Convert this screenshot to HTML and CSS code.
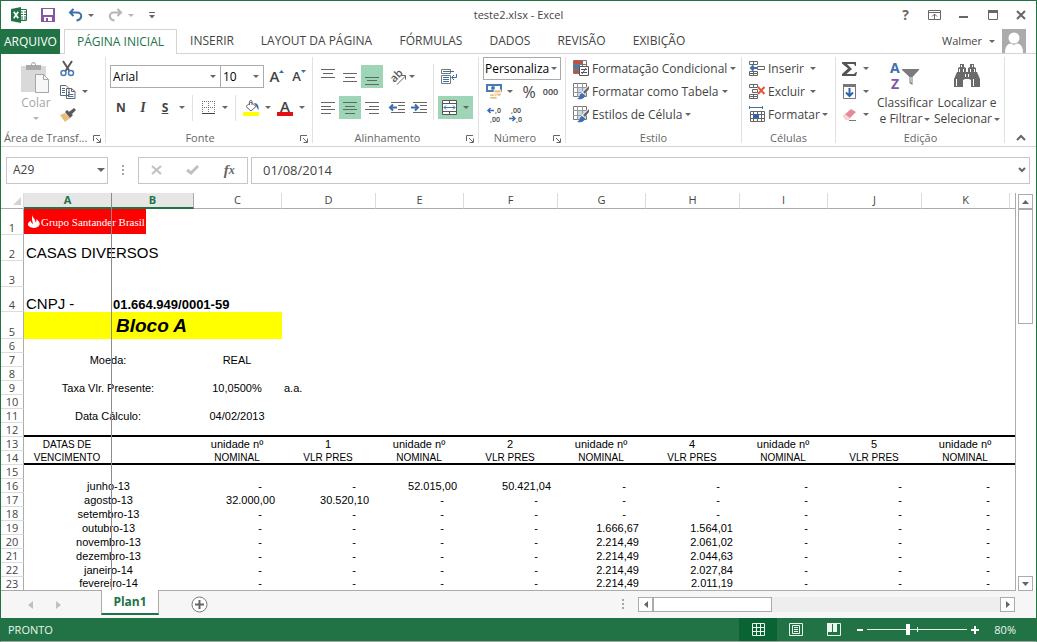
FILE: index.html
```html
<!DOCTYPE html>
<html lang="pt-BR">
<head>
<meta charset="utf-8">
<title>teste2.xlsx - Excel</title>
<link rel="stylesheet" href="styles.css">
</head>
<body>
<div class="window">
  <header class="titlebar">
    <div class="quick">
      <svg class="app-icon" width="17" height="16" viewBox="0 0 17 16"><path fill="#fff" stroke="#217346" d="M9 2.500h6.500v11H9"/><path stroke="#217346" stroke-width="1" d="M10 5h2M13 5h2M10 7.500h2M13 7.500h2M10 10h2M13 10h2M10 12h2M13 12h2"/><path fill="#217346" d="M0 2l10-2v16L0 14z"/><path stroke="#fff" stroke-width="1.700" d="M2.800 4.800l4.400 6.400M7.200 4.800l-4.400 6.400"/></svg>
      <button class="qbtn" aria-label="Salvar"><svg width="14" height="14" viewBox="0 0 14 14"><path fill="#8456a5" fill-rule="evenodd" d="M0 0h14v14H0zM2 1v6h10V1zM3 9v4h2v-3h2v3h4V9z"/></svg></button>
      <button class="qbtn" aria-label="Desfazer"><svg width="15" height="14" viewBox="0 0 15 14"><path fill="none" stroke="#3d6fae" stroke-width="2" d="M2 4.500h7c6 0 5.500 7-.5 8M5.500 1L2 4.500 5.500 8"/></svg></button>
      <i class="caret"></i>
      <button class="qbtn redo" aria-label="Refazer"><svg width="15" height="14" viewBox="0 0 15 14"><path fill="none" stroke="#b9b3b6" stroke-width="2" d="M13 4.500H6c-6 0-5.500 7 .5 8M9.500 1L13 4.500 9.500 8"/></svg></button>
      <i class="caret pale"></i>
      <button class="qbtn" aria-label="Personalizar barra"><svg width="6" height="7" viewBox="0 0 6 7"><path fill="#666" d="M0 0h6v1H0zM0 3h6L3 6.500z"/></svg></button>
    </div>
    <h1 class="doc-title">teste2.xlsx - Excel</h1>
    <div class="wincontrols">
      <button aria-label="Ajuda" class="help">?</button>
      <button aria-label="Opções da faixa"><svg width="13" height="10" viewBox="0 0 13 10"><path fill="none" stroke="#666" d="M.5.5h12v9H.5zM1 2.500h11M6.500 9V4M4 6.500L6.500 4 9 6.500"/></svg></button>
      <button aria-label="Minimizar"><svg width="10" height="10" viewBox="0 0 10 10"><path fill="#666" d="M0 6h9v2H0z"/></svg></button>
      <button aria-label="Maximizar"><svg width="10" height="10" viewBox="0 0 10 10"><path fill="none" stroke="#666" d="M.5.5h9v9H.5z"/><path fill="#666" d="M0 0h10v3H0z"/></svg></button>
      <button aria-label="Fechar"><svg width="10" height="10" viewBox="0 0 10 10"><path stroke="#666" stroke-width="2" d="M1 1l8 8M9 1L1 9"/></svg></button>
    </div>
  </header>

  <nav class="tabs">
    <button class="file">ARQUIVO</button>
    <button class="tab active">PÁGINA INICIAL</button>
    <button class="tab t-ins">INSERIR</button>
    <button class="tab t-lay">LAYOUT DA PÁGINA</button>
    <button class="tab t-for">FÓRMULAS</button>
    <button class="tab t-dad">DADOS</button>
    <button class="tab t-rev">REVISÃO</button>
    <button class="tab t-exi">EXIBIÇÃO</button>
    <button class="user">Walmer <i class="caret"></i></button>
    <svg class="avatar" width="24" height="24" viewBox="0 0 24 24"><path fill="#ababab" d="M0 0h24v24H0z"/><circle cx="12" cy="9" r="5.500" fill="#fff"/><path fill="#fff" d="M3 24c0-6 2-9 6-9.500l3 1.500 3-1.500c4 .5 6 3.500 6 9.500z"/></svg>
  </nav>

  <section class="ribbon">
    <div class="group g-clip">
      <div class="body">
        <button class="paste" disabled><svg width="30" height="32" viewBox="0 0 30 32"><path fill="#d9d9d9" d="M0 4h25v26H0z"/><path fill="#a9a9a9" d="M5 8V3h5c0-4 5-4 5 0h5v5zM11 3h3V1.500h-3z"/><path fill="#f7f7f7" stroke="#a6a6a6" d="M14.500 12.500h8l5 5v13h-13z"/><path fill="none" stroke="#a6a6a6" d="M22.500 12.500v5h5"/></svg><span>Colar</span><i class="caret pale"></i></button>
        <div class="stack">
          <button aria-label="Recortar"><svg width="15" height="16" viewBox="0 0 15 16"><path stroke="#595959" stroke-width="2" d="M3 0l6.500 10M12 0L5.500 10"/><circle cx="3.500" cy="12" r="2.500" fill="#fff" stroke="#4a79b5" stroke-width="1.500"/><circle cx="11" cy="12" r="2.500" fill="#fff" stroke="#4a79b5" stroke-width="1.500"/></svg></button>
          <button aria-label="Copiar"><svg width="16" height="14" viewBox="0 0 16 14"><path fill="#fff" stroke="#666" d="M.5.5H6l3 3v7H.5zM6.500 3.500h5l3.500 3v7H6.500zM11.500 3.500v3H15"/><path stroke="#3d6fae" d="M2 3.500h3M2 5.500h3M2 7.500h3M8 7.500h2M8 9.500h5.500M8 11.500h5.500"/></svg><i class="caret"></i></button>
          <button aria-label="Pincel"><svg width="16" height="14" viewBox="0 0 16 14"><path fill="#e8bd79" d="M0 7l5-2 5 5-5 4z"/><path fill="#595959" d="M5 4l2-2 6 5-3 3zM9 4l5-4 2 2-4 4z"/></svg></button>
        </div>
      </div>
      <div class="label">Área de Transf... <svg class="launch" width="8" height="8"><use href="#launch"/></svg></div>
    </div>

    <div class="group g-font">
      <div class="body two">
        <div class="line">
          <label class="combo c-font"><select aria-label="Fonte"><option>Arial</option></select></label>
          <label class="combo c-size"><select aria-label="Tamanho"><option>10</option></select></label>
          <button class="grow" aria-label="Aumentar fonte">A<svg width="5" height="3" viewBox="0 0 5 3"><path fill="#3d6fae" d="M0 3l2.500-3L5 3z"/></svg></button>
          <button class="grow shrink" aria-label="Diminuir fonte">A<svg width="5" height="3" viewBox="0 0 5 3"><path fill="#3d6fae" d="M0 0l2.500 3L5 0z"/></svg></button>
        </div>
        <div class="line">
          <button class="ib"><b>N</b></button>
          <button class="ib it"><b>I</b></button>
          <button class="ib"><b><u>S</u></b></button>
          <i class="caret"></i><i class="sep"></i>
          <button class="ib" aria-label="Bordas"><svg width="13" height="13" viewBox="0 0 13 13"><path fill="none" stroke="#777" stroke-dasharray="1 1" d="M0 .5h13M0 6.500h13M.5 0v12M6.500 0v12M12.500 0v12"/><path stroke="#444" d="M0 12.500h13"/></svg></button>
          <i class="caret"></i><i class="sep"></i>
          <button class="ib" aria-label="Preenchimento"><svg width="17" height="16" viewBox="0 0 17 16"><path fill="#fff" stroke="#666" d="M3 6.500L8 2l5 4.500-5 4.500zM6.500 5V1.500C7 0 9 0 9 1.500V5"/><path fill="#3d6fae" d="M11 3c4 0 5 3 4.500 7-1.500-1-1.500-3-2.500-4z"/><path fill="#ff0" d="M0 12h16v4H0z"/></svg></button>
          <i class="caret"></i>
          <button class="ib color" aria-label="Cor da fonte"><span>A</span></button>
          <i class="caret"></i>
        </div>
      </div>
      <div class="label">Fonte <svg class="launch" width="8" height="8"><use href="#launch"/></svg></div>
    </div>

    <div class="group g-align">
      <div class="body">
        <div class="two">
          <div class="line">
            <button class="ib" aria-label="Superior"><svg width="14" height="16"><path stroke="#666" d="M0 .5h14M2 4.500h10M0 8.500h14"/></svg></button>
            <button class="ib" aria-label="Meio"><svg width="14" height="16"><path stroke="#666" d="M0 4.500h14M2 8.500h10M0 12.500h14"/></svg></button>
            <button class="ib on" aria-label="Inferior"><svg width="14" height="16"><path stroke="#5a6b61" d="M0 8.500h14M2 11.500h10M0 15.500h14"/></svg></button>
            <button class="ib orient" aria-label="Orientação"><svg width="17" height="16" viewBox="0 0 17 16"><text x="1" y="12" transform="rotate(-45 5 9)" class="ab">ab</text><path fill="none" stroke="#666" d="M7 15.500L15.500 7M11.500 6.500h4v4"/></svg></button><i class="caret"></i>
          </div>
          <div class="line">
            <button class="ib" aria-label="Esquerda"><svg width="14" height="12"><path stroke="#666" d="M0 .5h14M0 4.500h10M0 7.500h14M0 11.500h10"/></svg></button>
            <button class="ib on" aria-label="Centro"><svg width="14" height="12"><path stroke="#5a6b61" d="M0 .5h14M2 4.500h10M0 7.500h14M2 11.500h10"/></svg></button>
            <button class="ib" aria-label="Direita"><svg width="14" height="12"><path stroke="#666" d="M0 .5h14M4 4.500h10M0 7.500h14M4 11.500h10"/></svg></button>
            <button class="ib indent" aria-label="Diminuir recuo"><svg width="16" height="12"><path stroke="#666" d="M2 .5h14M9 3.500h7M9 7.500h7M2 10.500h14"/><path fill="none" stroke="#3d6fae" stroke-width="2" d="M8 5.500H1M4 2.500l-3 3 3 3"/></svg></button>
            <button class="ib" aria-label="Aumentar recuo"><svg width="16" height="12"><path stroke="#666" d="M2 .5h14M9 3.500h7M9 7.500h7M2 10.500h14"/><path fill="none" stroke="#3d6fae" stroke-width="2" d="M0 5.500h7M4 2.500l3 3-3 3"/></svg></button>
          </div>
        </div>
        <i class="sep tall"></i>
        <div class="two merge">
          <button class="ib" aria-label="Quebrar texto"><svg width="17" height="15" viewBox="0 0 17 15"><path fill="#fff" stroke="#777" d="M.5.5h9v4h-9zM.5 6.500h9v8h-9z"/><path fill="none" stroke="#3d6fae" d="M2 2.500h11M2 8.500h6M2 10.500h6M2 12.500h6M15.500 5v3.500H11M13 6l-2.500 2.500L13 11"/></svg></button>
          <button class="mergebtn on" aria-label="Mesclar"><svg width="15" height="15" viewBox="0 0 15 15"><path fill="#fff" stroke="#555" d="M.5.5h14v14H.5z"/><path fill="none" stroke="#555" d="M0 3.500h15M0 11.500h15M7.500 0v3M7.500 12v3"/><path fill="none" stroke="#3d6fae" d="M2 7.500h11M4 5.500l-2 2 2 2M11 5.500l2 2-2 2"/></svg><i class="caret"></i></button>
        </div>
      </div>
      <div class="label">Alinhamento <svg class="launch" width="8" height="8"><use href="#launch"/></svg></div>
    </div>

    <div class="group g-num">
      <div class="body three">
        <label class="combo c-num"><select aria-label="Formato de número"><option>Personaliza</option></select></label>
        <div class="line">
          <button class="ib" aria-label="Moeda"><svg width="17" height="17" viewBox="0 0 17 17"><path fill="#4a79b5" d="M0 1h16v8H0z"/><path fill="#fff" d="M2 3h12v4H2z"/><circle cx="7" cy="5" r="2" fill="#4a79b5"/><path fill="#e8bd79" stroke="#fff" stroke-width=".7" d="M8 7h7v3H8zM8 10h7v3H8zM4 11h7v2.500H4zM4 13.500h7V16H4z"/></svg></button><i class="caret"></i>
          <button class="pct">%</button><button class="zeros">000</button>
        </div>
        <div class="line">
          <button class="ib" aria-label="Aumentar casas"><svg width="15" height="15" viewBox="0 0 15 15"><path fill="none" stroke="#3d6fae" stroke-width="1.500" d="M7 3.500H1M3.500 1L1 3.500 3.500 6"/><text class="dec" x="8" y="6">,0</text><text class="dec" x="3" y="15">,00</text></svg></button>
          <button class="ib" aria-label="Diminuir casas"><svg width="15" height="15" viewBox="0 0 15 15"><path fill="none" stroke="#3d6fae" stroke-width="1.500" d="M0 11.500h6M3.500 9L6 11.500 3.500 14"/><text class="dec" x="2" y="6">,00</text><text class="dec" x="7" y="15">,0</text></svg></button>
        </div>
      </div>
      <div class="label">Número <svg class="launch" width="8" height="8"><use href="#launch"/></svg></div>
    </div>

    <div class="group g-style">
      <div class="body three">
        <button class="row"><svg width="17" height="17" viewBox="0 0 17 17"><path fill="#fff" stroke="#777" d="M.5.5h13v13H.5zM0 4.500h14M0 9.500h14M5.500 0v14M9.500 0v14"/><path fill="#cf4b34" d="M1 1h8v3H1zM1 10h4v3H1z"/><path fill="#4a79b5" d="M1 5h6v4H1z"/><path fill="#fff" stroke="#555" d="M6.500 6.500h9v9h-9z"/><path stroke="#555" d="M8 9.500h6M8 12.500h6M13 8l-4 6"/></svg>Formatação Condicional<i class="caret"></i></button>
        <button class="row"><svg width="17" height="17"><use href="#tablebrush"/></svg>Formatar como Tabela<i class="caret"></i></button>
        <button class="row"><svg width="17" height="17"><use href="#tablebrush"/></svg>Estilos de Célula<i class="caret"></i></button>
      </div>
      <div class="label">Estilo</div>
    </div>

    <div class="group g-cells">
      <div class="body three">
        <button class="row"><svg width="17" height="16" viewBox="0 0 17 16"><path fill="#fff" stroke="#666" d="M.5.5h8v3h-8zM4.500 0v4M.5 10.500h8v4h-8zM0 12.500h9M4.500 10v5M8.500 5.500h7v3h-7z"/><path fill="none" stroke="#3d6fae" stroke-width="2" d="M8 7H2M4.500 4.500L2 7l2.500 2.500"/></svg><span class="short">Inserir</span><i class="caret"></i></button>
        <button class="row"><svg width="17" height="16" viewBox="0 0 17 16"><path fill="#fff" stroke="#666" d="M.5.5h8v3h-8zM4.500 0v4M.5 10.500h8v4h-8zM0 12.500h9M4.500 10v5M3.500 5.500h5v3h-5z"/><path stroke="#e0583a" stroke-width="2" d="M9 3l6.500 7M15.500 3L9 10"/></svg><span class="short">Excluir</span><i class="caret"></i></button>
        <button class="row"><svg width="17" height="17" viewBox="0 0 17 17"><path stroke="#3d6fae" d="M1 1.500h12M.5 0v3M13.500 0v3"/><path fill="#fff" stroke="#666" d="M1.500 5.500h14v10h-14zM1 8.500h15M1 12.500h15M4.500 5v11M8.500 5v11M12.500 5v11"/><path fill="#2f65a8" d="M4 8h6v4H4z"/></svg>Formatar<i class="caret"></i></button>
      </div>
      <div class="label">Células</div>
    </div>

    <div class="group g-edit">
      <div class="body">
        <div class="three edits">
          <button class="row" aria-label="Soma"><svg width="17" height="16" viewBox="0 0 17 16"><path fill="#555" d="M1 1h14v4h-1l-1-2H6l5 5-5.500 5H13l2-2h1l-1 4H1v-2l6-5.500L1 2.500z"/></svg><i class="caret"></i></button>
          <button class="row" aria-label="Preencher"><svg width="17" height="16" viewBox="0 0 17 16"><path fill="#fff" stroke="#777" d="M2.500.5h12v14h-12z"/><path fill="#777" d="M2 0h13v3H2z"/><path fill="none" stroke="#2f65a8" stroke-width="2" d="M8.500 4v8M5 8.500l3.500 3.500L12 8.500"/></svg><i class="caret"></i></button>
          <button class="row" aria-label="Limpar"><svg width="17" height="14" viewBox="0 0 17 14"><path fill="#e58a94" d="M2 8l8-7 5 3-8 8z"/><path fill="#f6d4d8" d="M2 8l2-2 5 4-2 2H4z"/><path stroke="#777" d="M8 12.500h7"/></svg><i class="caret"></i></button>
        </div>
        <button class="big sort"><svg width="30" height="28" viewBox="0 0 30 28"><text x="0" y="11" class="az a">A</text><text x="1" y="27" class="az z">Z</text><path fill="#7b7b7b" d="M12 7h17v1l-6.500 7v8l-3-2v-6L12 8z"/><path fill="#fff" d="M20.500 15h1v6l-1-1z"/></svg><span>Classificar</span><span>e Filtrar<i class="caret"></i></span></button>
        <button class="big"><svg width="26" height="28" viewBox="0 0 26 28"><path fill="#6a6a6a" d="M6 2h4v3l2 1v4h2V6l2-1V2h4v3l2 1v4h1l3 7v8h-9v-7l-2-1h-4l-2 1v7H0v-8l3-7h1V6l2-1z"/><path stroke="#fff" d="M7.500 3v2M18.500 3v2M5.500 7v3M20.500 7v3M9.500 7v3M16.500 7v3M2.500 17v7M19.500 17v7M11.500 12v3M14.500 12v3"/></svg><span>Localizar e</span><span>Selecionar<i class="caret"></i></span></button>
      </div>
      <div class="label">Edição</div>
    </div>
    <button class="collapse" aria-label="Recolher faixa"><svg width="10" height="6"><path fill="none" stroke="#666" stroke-width="2" d="M1 5l4-4 4 4"/></svg></button>
  </section>

  <section class="formula">
    <label class="namebox"><input aria-label="Caixa de nome" value="A29"><i class="caret wide"></i></label>
    <svg class="dots" width="3" height="11"><use href="#dots"/></svg>
    <div class="fxbox">
      <button aria-label="Cancelar"><svg width="11" height="10"><path stroke="#c0c0c0" stroke-width="2" d="M1 1l9 8M10 1L1 9"/></svg></button>
      <button aria-label="Inserir"><svg width="13" height="10"><path fill="none" stroke="#c0c0c0" stroke-width="3" d="M1 5l4 3 7-7"/></svg></button>
      <button class="fx">f<small>x</small></button>
    </div>
    <label class="fbox"><input aria-label="Barra de fórmulas" value="01/08/2014"><svg width="8" height="6"><path fill="none" stroke="#666" stroke-width="2" d="M1 1l3 3 3-3"/></svg></label>
  </section>

  <main class="work">
    <div class="sheet">
      <table>
        <colgroup><col class="rh"><col class="n"><col class="b"><col class="n"><col class="w"><col class="n"><col class="w"><col class="n"><col class="w"><col class="n"><col class="w"><col class="n"><col></colgroup>
        <thead><tr><th class="corner"><svg width="9" height="9"><path fill="#d4d4d4" d="M8 0v8H0z"/></svg></th><th class="sel">A</th><th class="sel">B</th><th>C</th><th>D</th><th>E</th><th>F</th><th>G</th><th>H</th><th>I</th><th>J</th><th>K</th><th class="last"></th></tr></thead>
        <tbody>
          <tr class="h26"><th>1</th><td colspan="12" class="logocell"><div class="logo"><svg width="12" height="13" viewBox="0 0 12 13"><path fill="#fff" d="M5 0c-1 3 3 4 2.500 7.500C9 6 8.500 5 8 4c5 3 5.500 8-2 9C-2 12.500-1 7 3 6c-.2 1.500 1 2 1.500 3.500C5.500 7 2.500 4 5 0z"/></svg>Grupo Santander Brasil</div></td></tr>
          <tr class="h26"><th>2</th><td colspan="12" class="t15">CASAS DIVERSOS</td></tr>
          <tr class="h26"><th>3</th><td colspan="12"></td></tr>
          <tr class="h25"><th>4</th><td class="t15">CNPJ -</td><td colspan="11" class="cnpj">01.664.949/0001-59</td></tr>
          <tr class="h27"><th>5</th><td class="yel"></td><td colspan="2" class="yel bloco">Bloco A</td><td colspan="9"></td></tr>
          <tr><th>6</th><td colspan="12"></td></tr>
          <tr><th>7</th><td colspan="2" class="c">Moeda:</td><td class="c">REAL</td><td colspan="9"></td></tr>
          <tr><th>8</th><td colspan="12"></td></tr>
          <tr><th>9</th><td colspan="2" class="c">Taxa Vlr. Presente:</td><td class="c">10,0500%</td><td colspan="9">a.a.</td></tr>
          <tr><th>10</th><td colspan="12"></td></tr>
          <tr><th>11</th><td colspan="2" class="c">Data Cálculo:</td><td class="c">04/02/2013</td><td colspan="9"></td></tr>
          <tr class="rule"><th>12</th><td colspan="12"></td></tr>
          <tr class="heads"><th>13</th><td class="caps">DATAS DE</td><td></td><td>unidade nº</td><td>1</td><td>unidade nº</td><td>2</td><td>unidade nº</td><td>4</td><td>unidade nº</td><td>5</td><td>unidade nº</td><td></td></tr>
          <tr class="heads rule"><th>14</th><td class="caps">VENCIMENTO</td><td></td><td class="caps">NOMINAL</td><td class="caps">VLR PRES</td><td class="caps">NOMINAL</td><td class="caps">VLR PRES</td><td class="caps">NOMINAL</td><td class="caps">VLR PRES</td><td class="caps">NOMINAL</td><td class="caps">VLR PRES</td><td class="caps">NOMINAL</td><td></td></tr>
          <tr><th>15</th><td colspan="12"></td></tr>
          <tr class="vals"><th>16</th><td colspan="2">junho-13</td><td class="nil">-</td><td class="nil">-</td><td>52.015,00</td><td>50.421,04</td><td class="nil">-</td><td class="nil">-</td><td class="nil">-</td><td class="nil">-</td><td class="nil">-</td><td></td></tr>
          <tr class="vals"><th>17</th><td colspan="2">agosto-13</td><td>32.000,00</td><td>30.520,10</td><td class="nil">-</td><td class="nil">-</td><td class="nil">-</td><td class="nil">-</td><td class="nil">-</td><td class="nil">-</td><td class="nil">-</td><td></td></tr>
          <tr class="vals"><th>18</th><td colspan="2">setembro-13</td><td class="nil">-</td><td class="nil">-</td><td class="nil">-</td><td class="nil">-</td><td class="nil">-</td><td class="nil">-</td><td class="nil">-</td><td class="nil">-</td><td class="nil">-</td><td></td></tr>
          <tr class="vals"><th>19</th><td colspan="2">outubro-13</td><td class="nil">-</td><td class="nil">-</td><td class="nil">-</td><td class="nil">-</td><td>1.666,67</td><td>1.564,01</td><td class="nil">-</td><td class="nil">-</td><td class="nil">-</td><td></td></tr>
          <tr class="vals"><th>20</th><td colspan="2">novembro-13</td><td class="nil">-</td><td class="nil">-</td><td class="nil">-</td><td class="nil">-</td><td>2.214,49</td><td>2.061,02</td><td class="nil">-</td><td class="nil">-</td><td class="nil">-</td><td></td></tr>
          <tr class="vals"><th>21</th><td colspan="2">dezembro-13</td><td class="nil">-</td><td class="nil">-</td><td class="nil">-</td><td class="nil">-</td><td>2.214,49</td><td>2.044,63</td><td class="nil">-</td><td class="nil">-</td><td class="nil">-</td><td></td></tr>
          <tr class="vals"><th>22</th><td colspan="2">janeiro-14</td><td class="nil">-</td><td class="nil">-</td><td class="nil">-</td><td class="nil">-</td><td>2.214,49</td><td>2.027,84</td><td class="nil">-</td><td class="nil">-</td><td class="nil">-</td><td></td></tr>
          <tr class="vals"><th>23</th><td colspan="2">fevereiro-14</td><td class="nil">-</td><td class="nil">-</td><td class="nil">-</td><td class="nil">-</td><td>2.214,49</td><td>2.011,19</td><td class="nil">-</td><td class="nil">-</td><td class="nil">-</td><td></td></tr>
        </tbody>
      </table>
    </div>
    <div class="vscroll">
      <button aria-label="Para cima"><svg width="7" height="4"><path fill="#666" d="M0 4l3.500-4L7 4z"/></svg></button>
      <div class="vthumb"></div>
      <button class="down" aria-label="Para baixo"><svg width="7" height="4"><path fill="#666" d="M0 0l3.500 4L7 0z"/></svg></button>
    </div>
  </main>

  <div class="sheetbar">
    <div class="navs">
      <button aria-label="Planilha anterior"><svg width="5" height="8"><path fill="#c0c0c0" d="M5 0v8L0 4z"/></svg></button>
      <button aria-label="Próxima planilha"><svg width="5" height="8"><path fill="#c0c0c0" d="M0 0v8l5-4z"/></svg></button>
    </div>
    <button class="plan">Plan1</button>
    <button class="add" aria-label="Nova planilha"><svg width="17" height="17"><circle cx="8.500" cy="8.500" r="7.500" fill="#fff" stroke="#777"/><path stroke="#666" stroke-width="2" d="M4 8.500h9M8.500 4v9"/></svg></button>
    <svg class="dots" width="3" height="11"><use href="#dots"/></svg>
    <div class="hscroll">
      <button aria-label="Para a esquerda"><svg width="4" height="7"><path fill="#666" d="M4 0v7L0 3.500z"/></svg></button>
      <div class="hthumb"></div>
      <button class="right" aria-label="Para a direita"><svg width="4" height="7"><path fill="#666" d="M0 0v7l4-3.500z"/></svg></button>
    </div>
  </div>

  <footer class="status">
    <span class="ready">PRONTO</span>
    <button class="view cur" aria-label="Normal"><svg width="13" height="13"><path fill="none" stroke="#eaf5ee" d="M.5.5h12v12H.5zM0 4.500h13M0 8.500h13M4.500 0v13M8.500 0v13"/></svg></button>
    <button class="view" aria-label="Layout da Página"><svg width="14" height="13"><path fill="none" stroke="#eaf5ee" d="M.5.500h13v12H.5zM3.500 2.500h7v8h-7zM5 4.500h4M5 6.500h4M5 8.500h4"/></svg></button>
    <button class="view" aria-label="Quebra de página"><svg width="14" height="13"><path fill="none" stroke="#eaf5ee" d="M.5.500h13v12H.5z"/><path fill="#eaf5ee" d="M0 0h5v9H0zM6 0h4v9H6z"/></svg></button>
    <button class="zb" aria-label="Reduzir"><svg width="6" height="8"><path fill="#fff" d="M0 3h6v2H0z"/></svg></button>
    <input class="zoom" type="range" min="0" max="100" value="40" aria-label="Zoom">
    <button class="zb" aria-label="Ampliar"><svg width="8" height="8"><path fill="#fff" d="M0 3h3V0h2v3h3v2H5v3H3V5H0z"/></svg></button>
    <span class="pctz">80%</span>
  </footer>
</div>

<svg class="defs" width="0" height="0">
  <symbol id="launch" viewBox="0 0 8 8"><path fill="none" stroke="#666" d="M.5 6V.5H7M3 3l4 4M7.500 3.500v4h-4"/></symbol>
  <symbol id="dots" viewBox="0 0 3 11"><path fill="#a6a6a6" d="M0 0h2v2H0zM0 4h2v2H0zM0 8h2v2H0z"/></symbol>
  <symbol id="tablebrush" viewBox="0 0 17 17"><path fill="#fff" stroke="#777" d="M.5.5h13v13H.5z"/><path fill="#c9d6e8" d="M5 4h8v9H5z"/><path fill="none" stroke="#999" d="M0 4.500h14M0 9.500h10M4.500 0v14M9.500 0v8"/><path fill="#fff" d="M16 2l1 2-5 8-7 4 3-6z"/><path fill="#666" d="M16 3v3l-4 5-2-2z"/><path fill="#3d6fae" d="M9 10l3 2c0 3-3 5-8 4 3-1 2-5 5-6z"/></symbol>
</svg>
</body>
</html>
```
FILE: styles.css
```css
* { box-sizing: border-box; }
body { margin: 0; background: #fff; color: #444; font: 12px/16px "Open Sans", "Noto Sans", sans-serif; }
button, input, select { font: inherit; color: inherit; background: none; border: 0; padding: 0; margin: 0; border-radius: 0; outline: 0; }
button { display: flex; align-items: center; justify-content: center; white-space: nowrap; }
svg { flex: none; display: block; overflow: visible; }
.defs { position: absolute; }
.window { min-height: 100vh; display: flex; flex-direction: column; border: 1px solid #217346; border-bottom-color: #a0a0a0; }
.caret { flex: none; width: 0; height: 0; border: 3px solid transparent; border-top: 3px solid #666; border-bottom: 0; }
.caret.pale { border-top-color: #b5b5b5; }
.caret.wide { border-width: 4px 4px 0; }

/* title bar */
.titlebar { display: grid; grid-template-columns: 1fr auto 1fr; align-items: center; height: 28px; }
.quick { display: flex; align-items: center; padding-left: 10px; }
.qbtn { height: 20px; }
.quick .qbtn { margin-left: 13px; }
.quick .caret { margin-left: 5px; }
.quick .redo { margin-left: 14px; }
.quick .qbtn:last-child { margin-left: 15px; }
.doc-title { margin: 0; font-size: 11px; font-weight: 400; line-height: 16px; }
.wincontrols { display: flex; justify-content: flex-end; padding-right: 5px; }
.wincontrols button { width: 29px; height: 20px; }
.wincontrols button:last-child { width: 20px; margin-left: 4px; }
.help { font-size: 14px; font-weight: 700; color: #666; }

/* ribbon tabs */
.tabs { display: flex; align-items: stretch; height: 25px; border-bottom: 1px solid #d4d4d4; }
.file { width: 59px; margin-bottom: -1px; background: #217346; color: #fff; }
.tab.active { width: 113px; margin: 0 0 -1px 4px; background: #fff; border: 1px solid #d4d4d4; border-bottom: 0; color: #217346; }
.t-ins { width: 70px; }
.t-lay { width: 139px; }
.t-for { width: 90px; }
.t-dad { width: 68px; }
.t-rev { width: 75px; }
.t-exi { width: 80px; }
.user { margin-left: auto; gap: 7px; padding-right: 7px; font-size: 11px; }
.avatar { margin-right: 10px; }

/* ribbon */
.ribbon { display: flex; height: 93px; padding-top: 3px; border-bottom: 1px solid #d4d4d4; }
.group { flex: none; display: flex; flex-direction: column; height: 86px; border-right: 1px solid #e1e1e1; }
.body { display: flex; height: 73px; flex: none; }
.label { display: flex; align-items: center; justify-content: center; height: 16px; color: #666; font-size: 11px; position: relative; }
.launch { position: absolute; right: 4px; top: 5px; }
.line { display: flex; align-items: center; }
.two, .three { display: flex; flex-direction: column; }
.two { gap: 8px; padding-top: 8px; }
.two .line { height: 23px; }
.three > * { height: 23px; }
.ib { width: 22px; height: 23px; flex: none; }
.on { background: #9fd5b7; }
.sep { width: 1px; height: 26px; background: #e1e1e1; }
.row { justify-content: flex-start; gap: 2px; }
.row .caret { margin-left: 1px; }
.combo { position: relative; display: block; height: 23px; border: 1px solid #ababab; color: #000; }
.combo select { width: 100%; height: 21px; padding-left: 2px; appearance: none; }
.combo::after { content: ""; position: absolute; right: 4px; top: 9px; border: 3px solid transparent; border-top-color: #666; border-bottom: 0; }

.g-clip { width: 105px; }
.g-clip .label { justify-content: flex-start; padding-left: 3px; }
.paste { flex-direction: column; width: 56px; margin-left: 7px; padding-top: 5px; justify-content: flex-start; color: #a6a6a6; }
.paste span { line-height: 18px; }
.paste .caret { margin-top: 5px; }
.stack { display: flex; flex-direction: column; width: 40px; margin-left: -4px; }
.stack button { height: 23px; justify-content: flex-start; gap: 6px; }
.g-font { width: 207px; padding-left: 4px; }
.g-font .label { padding-right: 22px; }
.c-font { width: 111px; }
.c-size { width: 44px; margin-left: -1px; }
.grow { width: 22px; margin-left: 2px; align-items: flex-start; font-size: 15px; font-weight: 600; line-height: 23px; }
.grow svg { margin-top: 5px; }
.shrink { font-size: 13px; margin-left: 0; }
.it { font-family: "Liberation Serif", serif; font-size: 14px; font-style: italic; }
.color span { width: 16px; height: 16px; font-size: 15px; font-weight: 600; line-height: 13px; border-bottom: 4px solid #e60f0f; }
.g-font .line:last-child .caret { margin: 0 3px; }
.g-font .sep { margin: 0 4px; }
.g-align { width: 166px; padding-left: 4px; }
.g-align .label { padding-right: 20px; }
.orient { margin-left: 4px; }
.g-align .orient + .caret { margin-left: 0; }
.indent { margin-left: 3px; }
.ab { font: 600 11px "Open Sans", sans-serif; fill: #555; }
.sep.tall { height: 56px; margin: 7px 4px 0 3px; }
.merge .ib { height: 23px; }
.mergebtn { width: 35px; height: 23px; gap: 6px; }
.g-num { width: 87px; padding-left: 4px; }
.g-num .label { padding-right: 18px; }
.c-num { width: 78px; }
.c-num select { padding-left: 1px; }
.c-num.combo::after { right: 3px; }
.g-num .line .caret { margin: 0 5px 0 2px; }
.pct { width: 22px; font-size: 16px; line-height: 20px; }
.zeros { width: 21px; font-size: 9px; font-weight: 600; line-height: 14px; }
.dec { font: 600 7px "Open Sans", sans-serif; fill: #444; }
.g-style { width: 176px; padding-left: 7px; }
.g-cells { width: 94px; padding-left: 7px; }
.g-style .label, .g-cells .label { padding-right: 7px; }
.short { min-width: 40px; text-align: left; }
.g-cells .row .caret { margin-left: 0; }
.g-edit { width: 169px; padding-left: 5px; }
.edits { width: 33px; }
.edits .row { gap: 4px; }
.g-edit .label { padding-right: 4px; }
.big { flex-direction: column; width: 62px; justify-content: flex-start; padding-top: 5px; line-height: 16px; }
.big svg { margin-bottom: 5px; }
.big span { display: flex; align-items: center; gap: 2px; }
.az { font: 700 14px "Open Sans", sans-serif; }
.a { fill: #3d6fae; }
.z { fill: #8456a5; }
.collapse { align-self: flex-end; margin: 0 10px 5px auto; }

/* formula bar */
.formula { display: flex; align-items: center; height: 46px; padding: 0 6px 0 5px; }
.namebox, .fxbox, .fbox { display: flex; align-items: center; height: 27px; border: 1px solid #c6c6c6; }
.namebox { width: 102px; padding: 0 6px; }
.namebox input { width: 84px; }
.formula .dots { margin: 0 13px 0 14px; }
.fxbox { width: 110px; justify-content: space-around; }
.fx { font: italic 700 15px/16px "Liberation Serif", serif; color: #666; }
.fx small { font-size: 12px; }
.fbox { flex: 1; margin-left: 3px; padding: 0 3px 0 11px; font-size: 13px; }
.fbox input { flex: 1; }

/* worksheet */
.work { flex: 1; display: flex; background: #fff; }
.sheet { flex: 1; min-width: 0; position: relative; overflow: hidden; border-right: 1px solid #ababab; border-bottom: 1px solid #ababab; }
.sheet::after { content: ""; position: absolute; left: 110px; top: 0; bottom: 0; width: 1px; background: #8c8c8c; }
table { width: 100%; table-layout: fixed; border-collapse: separate; border-spacing: 0; }
.rh { width: 23px; }
.n { width: 88px; }
.b { width: 82px; }
.w { width: 94px; }
th, td { height: 14px; padding: 0; font-weight: 400; line-height: 13px; vertical-align: bottom; white-space: nowrap; }
th { font-size: 11px; color: #444; }
thead th { height: 16px; line-height: 14px; border-bottom: 1px solid #ababab; border-right: 1px solid #dcdcdc; vertical-align: top; }
thead .sel { background: #e6e6e6; color: #217346; font-weight: 700; border-bottom: 2px solid #217346; border-right-color: #ababab; }
thead .last { border-right: 0; }
.corner svg { margin: 4px 0 0 12px; }
tbody th { border-right: 1px solid #ababab; border-bottom: 1px solid #dcdcdc; }
td { padding-left: 2px; font: 11px/14px "Liberation Sans", Arial, sans-serif; color: #000; }
.h25 > * { height: 25px; }
.h26 > * { height: 26px; }
.h27 > * { height: 27px; }
td.t15 { font-size: 15px; line-height: 17px; }
td.cnpj { font-size: 13px; font-weight: 700; line-height: 15px; padding-left: 1px; }
td.bloco { font-size: 19px; font-weight: 700; font-style: italic; line-height: 26px; padding-left: 4px; }
.yel { background: #ff0; }
.c, .heads td { text-align: center; padding: 0 2px 0 0; }
.rule td { border-bottom: 2px solid #000; line-height: 12px; }
td.caps { font-size: 10px; line-height: 12px; }
.rule td.caps { line-height: 10px; }
.vals td { text-align: right; padding: 0 7px 0 0; }
.vals td.nil { padding-right: 20px; }
.vals td:nth-child(2) { text-align: center; padding: 0 1px 0 0; }
tbody tr:last-child > * { height: 13px; line-height: 13px; border-bottom: 0; }
td.logocell { padding: 0; vertical-align: top; }
.logo { display: flex; align-items: center; gap: 1px; width: 122px; height: 25px; padding-left: 4px; background: #f00; color: #fff; font: 11px/24px "Liberation Serif", serif; }

/* scroll bars */
.vscroll { display: flex; flex-direction: column; width: 20px; padding: 1px 3px 0 2px; }
.vscroll button, .hscroll button { flex: none; width: 15px; height: 15px; border: 1px solid #ababab; background: #fff; }
.vthumb { height: 115px; border: 1px solid #ababab; background: #fff; }
.vscroll .down { margin-top: auto; }
.sheetbar { display: flex; align-items: center; height: 27px; background: #f6f6f6; }
.navs { display: flex; gap: 23px; padding-left: 27px; width: 100px; }
.plan { align-self: flex-start; width: 58px; height: 25px; margin-top: -1px; background: #fff; border: 1px solid #ababab; border-top: 0; border-bottom: 2px solid #217346; color: #217346; font-weight: 700; position: relative; }
.add { margin-left: 32px; }
.sheetbar .dots { margin-left: auto; margin-right: 13px; }
.hscroll { display: flex; width: 377px; margin-right: 21px; background: #eee; }
.hthumb { width: 119px; border: 1px solid #ababab; background: #fff; }
.hscroll .right { margin-left: auto; }

/* status bar */
.status { display: flex; align-items: center; height: 23px; padding: 0 20px 0 7px; background: #217346; color: #eaf5ee; font-size: 11px; }
.ready { margin-right: auto; }
.view { width: 38px; height: 23px; }
.cur { background: #0a6332; }
.zb { margin: 0 4px; }
.zoom { width: 100px; height: 11px; appearance: none; background: linear-gradient(#eaf5ee, #eaf5ee) 50px 3px / 1px 5px no-repeat, linear-gradient(#eaf5ee, #eaf5ee) 0 5px / 100% 1px no-repeat; }
.zoom::-webkit-slider-thumb { appearance: none; width: 4px; height: 11px; background: #fff; }
.pctz { margin-left: 11px; }
```
